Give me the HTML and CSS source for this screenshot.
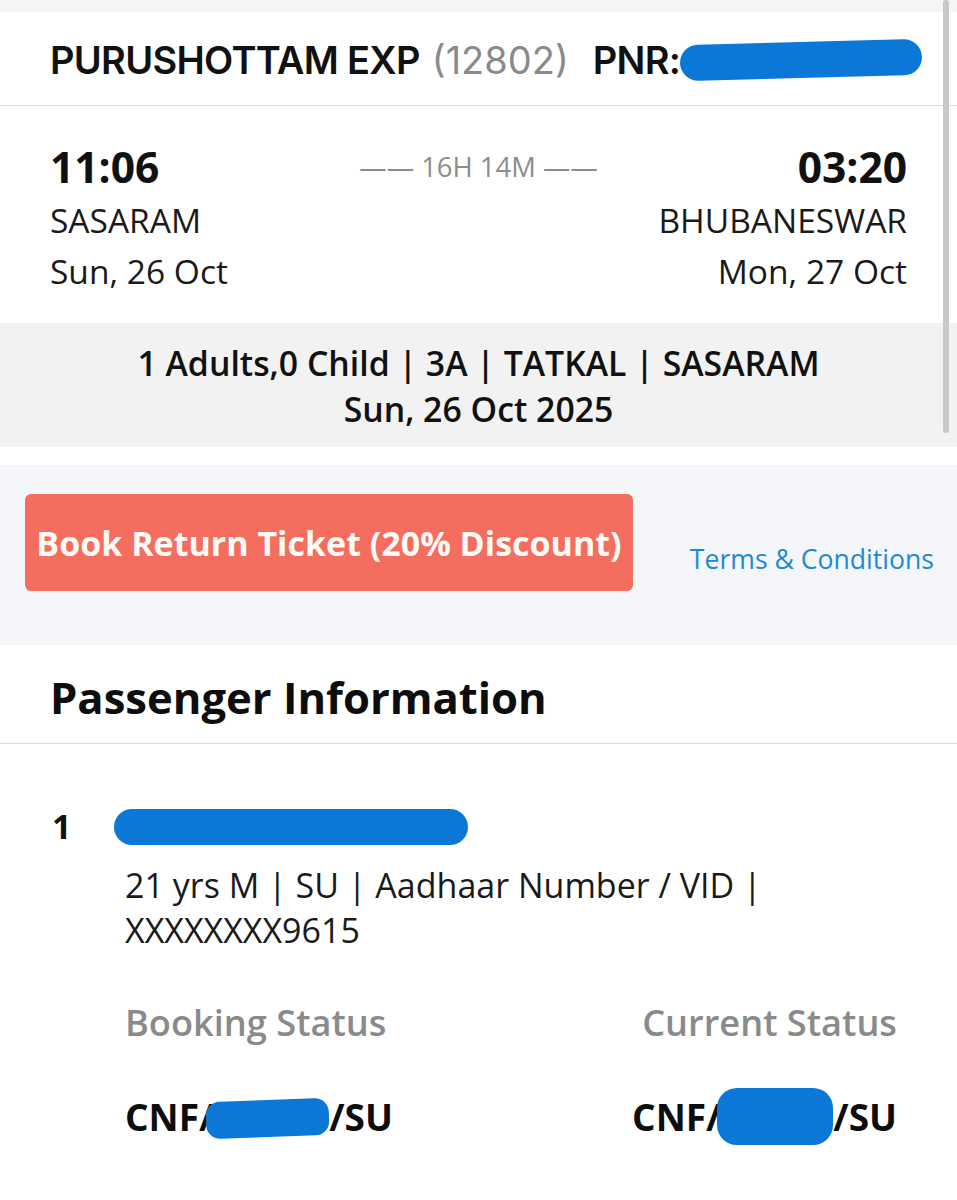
FILE: index.html
```html
<!DOCTYPE html>
<html lang="en">
<head>
<meta charset="utf-8">
<title>Booking Details</title>
<link rel="stylesheet" href="styles.css">
</head>
<body>
<div class="page">
  <div class="topband"></div>
  <header class="train-head">
    <span class="train-name">PURUSHOTTAM EXP</span>
    <span class="train-no">(12802)</span>
    <span class="pnr">PNR:<span class="redact redact-pnr"></span></span>
  </header>

  <section class="journey">
    <div class="stop">
      <div class="time">11:06</div>
      <div class="station">SASARAM</div>
      <div class="date">Sun, 26 Oct</div>
    </div>
    <div class="duration">—— 16H 14M ——</div>
    <div class="stop stop-right">
      <div class="time">03:20</div>
      <div class="station">BHUBANESWAR</div>
      <div class="date">Mon, 27 Oct</div>
    </div>
  </section>

  <section class="summary">
    <div>1 Adults,0 Child | 3A | TATKAL | SASARAM</div>
    <div>Sun, 26 Oct 2025</div>
  </section>

  <section class="promo">
    <button class="return-btn">Book Return Ticket (20% Discount)</button>
    <a class="terms" href="#">Terms &amp; Conditions</a>
  </section>

  <section class="passengers">
    <h2 class="pass-title">Passenger Information</h2>
    <div class="pass-list">
      <div class="pass-row">
        <div class="pass-no">1</div>
        <div class="pass-body">
          <div class="pass-name"><span class="redact redact-name"></span></div>
          <div class="pass-details">21 yrs M | SU | Aadhaar Number / VID |<br>XXXXXXXX9615</div>
          <div class="status-labels">
            <span>Booking Status</span>
            <span>Current Status</span>
          </div>
          <div class="status-values">
            <span class="status">CNF/<span class="redact redact-berth"></span>/SU</span>
            <span class="status">CNF/<span class="redact redact-berth2"></span>/SU</span>
          </div>
        </div>
      </div>
    </div>
  </section>
  <div class="scrollbar"></div>
</div>
</body>
</html>
```

FILE: styles.css
```css
html, body {
  margin: 0;
  padding: 0;
  background: #ffffff;
}
body {
  font-family: "Open Sans", "Noto Sans", sans-serif;
  color: #111111;
}
.page {
  width: 957px;
  position: relative;
}
.topband {
  height: 12px;
  background: #f4f5f7;
}
.train-head {
  border-bottom: 1px solid #dedede;
  display: flex;
  align-items: center;
  padding-left: 50px;
  padding-top: 3px;
  box-sizing: border-box;
  height: 94px;
  font-family: "Inter", "Liberation Sans", sans-serif;
  font-size: 38px;
  letter-spacing: -0.7px;
  white-space: nowrap;
}
.train-name {
  font-weight: 600;
  color: #111;
}
.train-no {
  font-weight: 400;
  color: #8a8a8a;
  margin-left: 12px;
  letter-spacing: 0;
}
.pnr {
  font-weight: 600;
  color: #111;
  margin-left: 24px;
  display: flex;
  align-items: center;
}
.redact {
  display: inline-block;
  background: #0b77d6;
  border-radius: 20px;
  vertical-align: middle;
}
.redact-pnr {
  width: 242px;
  height: 36px;
  transform: rotate(-1.5deg);
}

.journey {
  display: grid;
  grid-template-columns: 1fr auto 1fr;
  padding: 33px 50px 26px 50px;
}
.time {
  font-size: 42.5px;
  font-weight: 700;
  line-height: 56px;
}
.station, .date {
  font-size: 33.5px;
  line-height: 51px;
  color: #1a1a1a;
}
.stop-right {
  text-align: right;
}
.duration {
  font-size: 27.4px;
  line-height: 56px;
  color: #8c8c8c;
  white-space: nowrap;
}

.summary {
  background: #f2f2f2;
  padding: 17px 0 15px;
  text-align: center;
  font-size: 33.8px;
  font-weight: 600;
  line-height: 46px;
  color: #111;
}

.promo {
  margin-top: 18px;
  background: #f5f6f9;
  height: 180px;
  box-sizing: border-box;
  padding: 29px 23px 0 25px;
  display: flex;
  align-items: flex-start;
}
.return-btn {
  width: 608px;
  height: 97px;
  border: none;
  border-radius: 6px;
  background: #f46d5e;
  color: #fffaf6;
  font-family: "Open Sans", sans-serif;
  font-size: 34px;
  font-weight: 700;
  padding: 0;
  white-space: nowrap;
}
.terms {
  margin-left: 57px;
  margin-top: 47px;
  font-size: 26.6px;
  line-height: 36px;
  color: #1c8ad5;
  text-decoration: none;
  white-space: nowrap;
}

.pass-title {
  margin: 0;
  padding: 22px 50px 16px;
  font-size: 43.6px;
  font-weight: 700;
  line-height: 60px;
  color: #0d0d0d;
  border-bottom: 1px solid #d9d9d9;
}
.pass-list {
  padding: 60px 60px 40px 50px;
}
.pass-row {
  display: flex;
}
.pass-no {
  width: 75px;
  flex: none;
  font-size: 34px;
  font-weight: 700;
  line-height: 45px;
  padding-left: 2px;
  box-sizing: border-box;
}
.pass-body {
  flex: 1;
}
.pass-name {
  height: 45px;
  display: flex;
  align-items: center;
  margin-left: -11px;
}
.redact-name {
  width: 354px;
  height: 36px;
}
.pass-details {
  margin-top: 14px;
  font-size: 34px;
  line-height: 45px;
  color: #1a1a1a;
}
.status-labels {
  margin-top: 46px;
  display: flex;
  justify-content: space-between;
  font-size: 36.2px;
  font-weight: 600;
  line-height: 46px;
  color: #8a8a8a;
}
.status-values {
  margin-top: 48px;
  display: flex;
  justify-content: space-between;
  font-size: 37px;
  font-weight: 700;
  line-height: 48px;
  color: #0d0d0d;
}
.status {
  white-space: nowrap;
}
.redact-berth {
  width: 123px;
  height: 37px;
  margin: 0 0 0 -8px;
  border-radius: 14px;
  transform: translateY(-3px) rotate(-2deg);
}
.redact-berth2 {
  width: 116px;
  height: 57px;
  margin: 0 0 0 -4px;
  border-radius: 20px;
  transform: translateY(-5px);
}
.scrollbar {
  position: absolute;
  top: 0;
  right: 8px;
  width: 6px;
  height: 433px;
  background: #c8c8c8;
  border-radius: 3px;
}
```
